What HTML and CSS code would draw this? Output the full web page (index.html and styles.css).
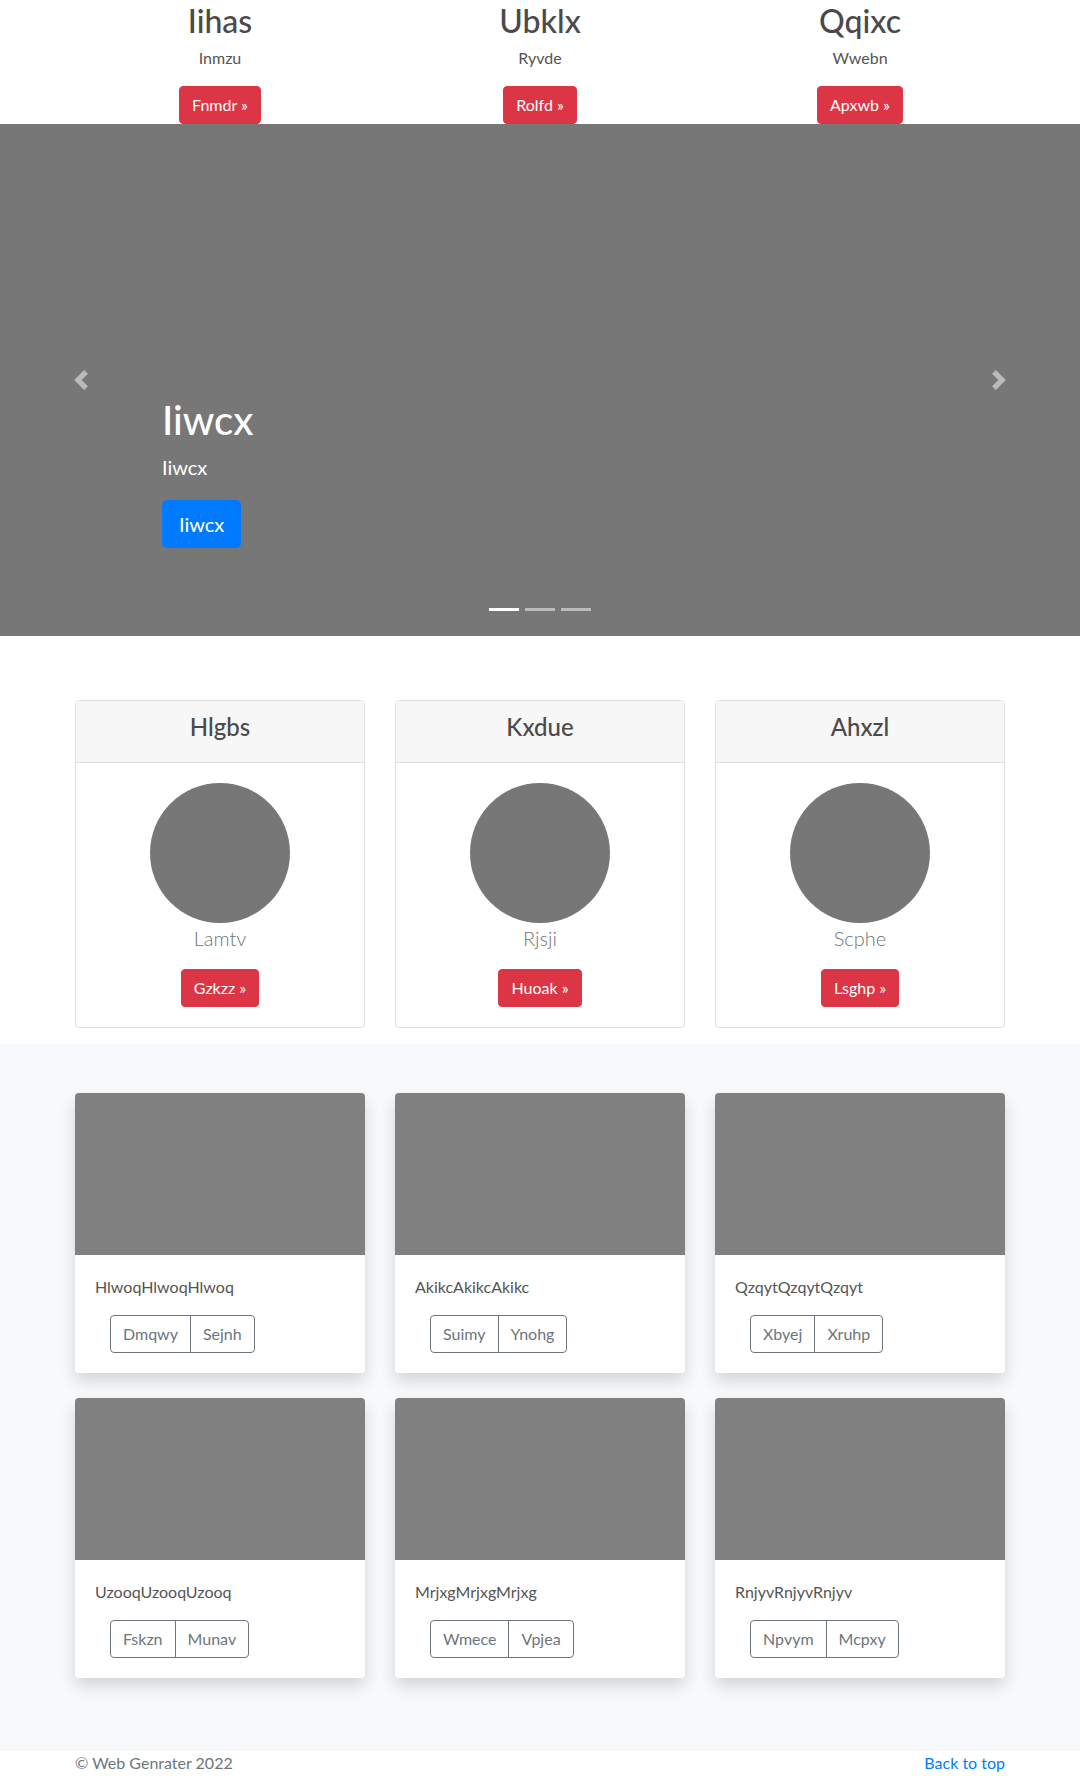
FILE: index.html
```html
<!DOCTYPE html>
<html lang="en">
<head>
<meta charset="utf-8">
<title>Page</title>
<link rel="stylesheet" href="styles.css">
</head>
<body>
<section class="features">
  <div class="container">
    <div class="row">
      <div class="feature">
        <h2 class="feature-title">Iihas</h2>
        <p class="feature-text">Inmzu</p>
        <a class="btn btn-danger" href="#">Fnmdr &raquo;</a>
      </div>
      <div class="feature">
        <h2 class="feature-title">Ubklx</h2>
        <p class="feature-text">Ryvde</p>
        <a class="btn btn-danger" href="#">Rolfd &raquo;</a>
      </div>
      <div class="feature">
        <h2 class="feature-title">Qqixc</h2>
        <p class="feature-text">Wwebn</p>
        <a class="btn btn-danger" href="#">Apxwb &raquo;</a>
      </div>
    </div>
  </div>
</section>

<div class="carousel">
  <div class="carousel-caption">
    <h1 class="caption-title">Iiwcx</h1>
    <p class="caption-lead">Iiwcx</p>
    <a class="btn btn-primary btn-lg" href="#">Iiwcx</a>
  </div>
  <a class="carousel-control control-prev" href="#">
    <svg class="control-icon" viewBox="0 0 8 8" width="20" height="20"><path d="M5.25 0l-4 4 4 4 1.5-1.5L4.25 4l2.5-2.5L5.25 0z"/></svg>
  </a>
  <a class="carousel-control control-next" href="#">
    <svg class="control-icon" viewBox="0 0 8 8" width="20" height="20"><path d="M2.75 0l-1.5 1.5L3.75 4l-2.5 2.5L2.75 8l4-4-4-4z"/></svg>
  </a>
  <ol class="indicators">
    <li class="indicator active"></li>
    <li class="indicator"></li>
    <li class="indicator"></li>
  </ol>
</div>

<section class="pricing">
  <div class="container">
    <div class="row">
      <div class="p-card">
        <div class="p-card-header"><h4 class="p-card-title">Hlgbs</h4></div>
        <div class="p-card-body">
          <div class="avatar"></div>
          <p class="p-card-lead">Lamtv</p>
          <a class="btn btn-danger" href="#">Gzkzz &raquo;</a>
        </div>
      </div>
      <div class="p-card">
        <div class="p-card-header"><h4 class="p-card-title">Kxdue</h4></div>
        <div class="p-card-body">
          <div class="avatar"></div>
          <p class="p-card-lead">Rjsji</p>
          <a class="btn btn-danger" href="#">Huoak &raquo;</a>
        </div>
      </div>
      <div class="p-card">
        <div class="p-card-header"><h4 class="p-card-title">Ahxzl</h4></div>
        <div class="p-card-body">
          <div class="avatar"></div>
          <p class="p-card-lead">Scphe</p>
          <a class="btn btn-danger" href="#">Lsghp &raquo;</a>
        </div>
      </div>
    </div>
  </div>
</section>

<section class="album">
  <div class="container">
    <div class="album-grid">
      <div class="a-card">
        <div class="a-card-img"></div>
        <div class="a-card-body">
          <p class="a-card-text">HlwoqHlwoqHlwoq</p>
          <div class="btn-group"><a class="btn btn-outline" href="#">Dmqwy</a><a class="btn btn-outline" href="#">Sejnh</a></div>
        </div>
      </div>
      <div class="a-card">
        <div class="a-card-img"></div>
        <div class="a-card-body">
          <p class="a-card-text">AkikcAkikcAkikc</p>
          <div class="btn-group"><a class="btn btn-outline" href="#">Suimy</a><a class="btn btn-outline" href="#">Ynohg</a></div>
        </div>
      </div>
      <div class="a-card">
        <div class="a-card-img"></div>
        <div class="a-card-body">
          <p class="a-card-text">QzqytQzqytQzqyt</p>
          <div class="btn-group"><a class="btn btn-outline" href="#">Xbyej</a><a class="btn btn-outline" href="#">Xruhp</a></div>
        </div>
      </div>
      <div class="a-card">
        <div class="a-card-img"></div>
        <div class="a-card-body">
          <p class="a-card-text">UzooqUzooqUzooq</p>
          <div class="btn-group"><a class="btn btn-outline" href="#">Fskzn</a><a class="btn btn-outline" href="#">Munav</a></div>
        </div>
      </div>
      <div class="a-card">
        <div class="a-card-img"></div>
        <div class="a-card-body">
          <p class="a-card-text">MrjxgMrjxgMrjxg</p>
          <div class="btn-group"><a class="btn btn-outline" href="#">Wmece</a><a class="btn btn-outline" href="#">Vpjea</a></div>
        </div>
      </div>
      <div class="a-card">
        <div class="a-card-img"></div>
        <div class="a-card-body">
          <p class="a-card-text">RnjyvRnjyvRnjyv</p>
          <div class="btn-group"><a class="btn btn-outline" href="#">Npvym</a><a class="btn btn-outline" href="#">Mcpxy</a></div>
        </div>
      </div>
    </div>
  </div>
</section>

<footer class="footer">
  <div class="container">
    <a class="back-top" href="#">Back to top</a>
    <p class="copyright">&copy; Web Genrater 2022</p>
  </div>
</footer>
</body>
</html>
```

FILE: styles.css
```css
* { box-sizing: border-box; }

body {
  margin: 0;
  font-family: "Segoe UI", Lato, "Noto Sans", sans-serif;
  font-size: 16px;
  line-height: 1.5;
  color: #555;
  background: #fff;
}

a { text-decoration: none; }

.container {
  max-width: 960px;
  margin: 0 auto;
  padding: 0 15px;
}

.row {
  display: grid;
  grid-template-columns: repeat(3, 1fr);
  column-gap: 30px;
}

/* buttons */
.btn {
  display: inline-block;
  font-size: 16px;
  line-height: 24px;
  padding: 6px 12px;
  border: 1px solid transparent;
  border-radius: 4px;
  text-align: center;
  vertical-align: middle;
}
.btn-danger { background: #dc3545; border-color: #dc3545; color: #fff; }
.btn-primary { background: #007bff; border-color: #007bff; color: #fff; }
.btn-lg {
  font-size: 20px;
  line-height: 30px;
  padding: 8px 16px;
  border-radius: 4.8px;
}

/* features */
.feature { text-align: center; }
.feature-title {
  margin: 0 0 6px;
  padding-top: 2px;
  font-size: 32px;
  line-height: 1.2;
  font-weight: 500;
  color: #4a4a4a;
}
.feature-text { margin: 0 0 16px; }
.feature .btn { display: block; width: max-content; margin: 0 auto; }

/* carousel */
.carousel {
  position: relative;
  height: 512px;
  background: #777;
}
.carousel-caption {
  position: absolute;
  left: 15%;
  bottom: 88px;
  color: #fff;
}
.caption-title {
  margin: 0 0 8px;
  font-size: 40px;
  line-height: 1.2;
  font-weight: 500;
}
.caption-lead {
  margin: 0 0 18px;
  font-size: 20px;
  line-height: 30px;
}
.carousel-caption .btn { display: block; width: max-content; }

.carousel-control {
  position: absolute;
  top: 0;
  bottom: 0;
  width: 15%;
  display: flex;
  align-items: center;
  justify-content: center;
}
.control-prev { left: 0; }
.control-next { right: 0; }
.control-icon { fill: #fff; opacity: 0.5; display: block; }

.indicators {
  position: absolute;
  left: 0;
  right: 0;
  bottom: 25px;
  margin: 0;
  padding: 0;
  list-style: none;
  display: flex;
  justify-content: center;
  gap: 6px;
}
.indicator {
  width: 30px;
  height: 3px;
  background: #fff;
  opacity: 0.5;
}
.indicator.active { opacity: 1; }

/* pricing */
.pricing { padding: 64px 0 16px; }
.p-card {
  border: 1px solid #dfdfdf;
  border-radius: 4px;
  text-align: center;
  overflow: hidden;
}
.p-card-header {
  background: #f7f7f7;
  border-bottom: 1px solid #dfdfdf;
  padding: 12px 20px;
}
.p-card-title {
  margin: 0 0 8px;
  font-size: 24px;
  line-height: 1.2;
  font-weight: 500;
  color: #4a4a4a;
}
.p-card-body { padding: 20px; }
.avatar {
  width: 140px;
  height: 140px;
  border-radius: 50%;
  background: #777;
  margin: 0 auto;
}
.p-card-lead {
  margin: 0 0 16px;
  font-size: 20px;
  line-height: 30px;
  font-weight: 300;
  color: #6c757d;
}

/* album */
.album {
  background: #f8f9fa;
  padding: 49px 0 48px;
}
.album-grid {
  display: grid;
  grid-template-columns: repeat(3, 1fr);
  column-gap: 30px;
}
.a-card {
  background: #fff;
  border-radius: 4px;
  overflow: hidden;
  box-shadow: 0 8px 16px rgba(0, 0, 0, 0.15);
  margin-bottom: 25px;
}
.a-card-img {
  height: 162px;
  background: #808080;
}
.a-card-body { padding: 20px; }
.a-card-text { margin: 0 0 16px; }
.btn-group {
  display: inline-flex;
  margin-left: 15px;
}
.btn-outline {
  color: #6c757d;
  border-color: #6c757d;
  background: transparent;
}
.btn-group .btn-outline:first-child { border-radius: 4px 0 0 4px; }
.btn-group .btn-outline:last-child { border-radius: 0 4px 4px 0; margin-left: -1px; }

/* footer */
.footer { color: #6c757d; }
.copyright { margin: 0 0 16px; }
.back-top { float: right; color: #007bff; }
```
